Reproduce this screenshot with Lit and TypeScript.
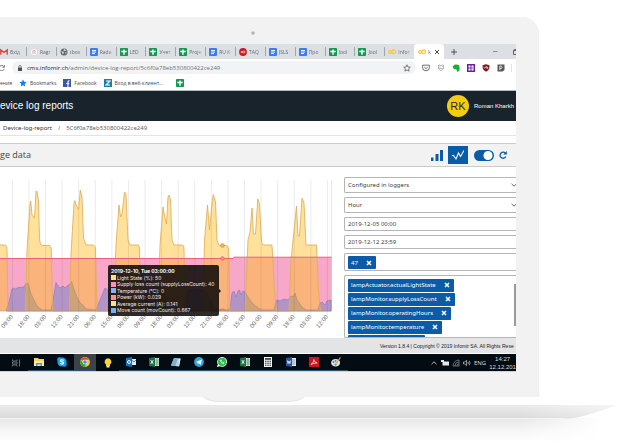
import { LitElement, html, svg, css, TemplateResult } from "lit";
import { customElement } from "lit/decorators.js";

type Icon = TemplateResult;
const box = (cls: string, vb: string, body: unknown): Icon =>
  html`<svg class="ic ${cls}" viewBox=${vb} aria-hidden="true">${body}</svg>`;

const docs = box("s8", "0 0 8 8", svg`<rect width="8" height="8" rx="1" fill="#3b7ded"/><path d="M2 2.5h4M2 4h4M2 5.5h3" stroke="#fff" stroke-width=".9"/>`);
const sheet = box("s8", "0 0 8 8", svg`<rect width="8" height="8" rx=".8" fill="#109a52"/><path d="M1.3 3.5h5.4M4 1.5v5.2" stroke="#fff" stroke-width="1.4"/>`);
const gmail = box("s8", "0 0 8 8", svg`<path d="M.8 6.8V1.8L4 4.4l3.2-2.6v5" fill="none" stroke="#d0423a" stroke-width="1.3"/>`);
const ragr = box("s8", "0 0 8 8", svg`<circle cx="4" cy="4" r="3.6" fill="#fff" stroke="#c9c9cc" stroke-width=".5"/><path d="M3 6V2.4h1.3a1 1 0 0 1 0 2L5.4 6" fill="none" stroke="#d58d87" stroke-width=".8"/>`);
const globe = box("s8", "0 0 8 8", svg`<circle cx="4" cy="4" r="3.5" fill="#64686c"/><path d="M1.3 3.2l2 .4.6 1.3-1 1.4zM4 .9l-.5 1.5 1.5.7 1.6-.7zM5 4.5l1.6-.3-.6 1.7z" fill="#dee1e6"/>`);
const red = box("s8", "0 0 8 8", svg`<circle cx="4" cy="4" r="3.9" fill="#cf1720"/><path d="M2.3 5.2V3.2M2.3 3.6q.8-.8 1.3 0v1.6M3.6 3.6q.9-.8 1.3 0v1.6M5.8 2.6v2.6" fill="none" stroke="#fff" stroke-width=".6"/>`);
const loop = box("s8", "0 0 8 8", svg`<rect x=".6" y="2.6" width="3" height="2.9" rx="1.4" fill="none" stroke="#f3c93a" stroke-width="1.2"/><rect x="4" y="1.8" width="3.4" height="4" rx="1.5" fill="none" stroke="#f3c93a" stroke-width="1.2"/>`);

const tabs: [Icon, string][] = [
  [gmail, "Вхід"], [ragr, "Ragr"], [globe, "tbox"], [docs, "Rada"], [sheet, "LED"],
  [sheet, "Учет"], [sheet, "Proje"], [docs, "RU K"], [red, "TAQ"], [docs, "JSLS"],
  [docs, "Про"], [sheet, "Jool"], [sheet, "Jool"], [loop, "Infor"],
];

const extensions: Icon[] = [
  box("s8", "0 0 8 8", svg`<path d="M.6 1.2h6.8v2.4a3.4 3.2 0 0 1-6.8 0z" fill="none" stroke="#5a5d60" stroke-width=".9"/><path d="M2.3 3.2L4 4.7l1.7-1.5" fill="none" stroke="#5a5d60" stroke-width=".9"/>`),
  box("s8", "0 0 8 8", svg`<path d="M1 1.8l1.5-.8L4 2l1.5-1L7 1.8 5.6 3 7 4.1l-1.5.8L4 4l-1.500.9L1 4.100 2.400 3zM2.400 5.600L4 6.600l1.600-1" fill="none" stroke="#85888b" stroke-width=".7"/>`),
  box("s8", "0 0 8 8", svg`<path d="M.6 2.600L3 .5q2.200-.4 4 .6 1 2.700.4 5.500-.5 1.200-2 1.100-1.200-.4-.5-1.600l-.9-.9q-2.900.6-3.400-2.600z" fill="#1cae38"/>`),
  box("s8", "0 0 8 8", svg`<rect width="8" height="8" fill="#6c1f9c"/><path d="M1.500 1.500h2v2h-2zM1.500 4.500h2v2h-2zM4.500 1.500h2v5h-2z" fill="#fff"/><path d="M4.500 4h1.500" stroke="#6c1f9c" stroke-width=".8"/>`),
  box("s8", "0 0 8 8", svg`<path d="M4 .3l3.400 1v2.500Q7 6.600 4 7.800 1 6.600.6 3.800V1.300z" fill="#80141b"/><path d="M2 2.700v1q.8.900 1.500 0v-1M4.700 2v2.400h1V3.200h-1" fill="none" stroke="#fff" stroke-width=".6"/>`),
  box("s8", "0 0 8 8", svg`<path d="M.5.5h7v5.500L5.500 7.500h-5z" fill="#54575a"/><path d="M2.800 6V2h1.400a1.500 1.500 0 0 1 0 2.700H2.800" fill="none" stroke="#fff" stroke-width=".8"/>`),
];

const excel = box("s10", "0 0 10 10", svg`<path d="M5 1h5v8H5z" fill="#e3efe6"/><path d="M6 3h4M6 5h4M6 7h4M8 1v8" stroke="#2a8150" stroke-width=".6"/><path d="M0 1l6-1v10L0 9z" fill="#1e7145"/><path d="M1.800 3.200l2.400 3.600M4.200 3.200L1.800 6.800" stroke="#fff" stroke-width=".9"/>`);

const apps: { name: string; art: Icon; open?: boolean; active?: boolean }[] = [
  { name: "Task view", art: box("s10", "0 0 10 10", svg`<path d="M1.500 1.500v1.500h4.500V1.500M1.500 8.500V7h4.500v1.500M1.500 4h4.500v2h-4.500zM8.500 1.500v7M8 4h1" fill="none" stroke="#8e9296" stroke-width=".7"/>`) },
  { name: "Explorer", open: true, art: box("s10", "0 0 10 10", svg`<path d="M0 1h4l1 1h5v7H0z" fill="#f6d365"/><path d="M0 4h10v5H0z" fill="#fdeba5"/><path d="M2 9V6h6v3H6.500V7.500h-3V9z" fill="#3e9fdc"/>`) },
  { name: "Skype", open: true, art: box("s10", "0 0 10 10", svg`<circle cx="5" cy="5" r="4.600" fill="#1ba2ea"/><circle cx="2.500" cy="2.600" r="2.300" fill="#1ba2ea"/><circle cx="7.500" cy="7.400" r="2.300" fill="#1b95e0"/><path d="M6.700 3.500Q5 2.300 3.700 3.200 3 4.500 5 4.900q2 .4 1.500 1.600Q5 7.700 3.300 6.400" fill="none" stroke="#fff" stroke-width="1.100"/>`) },
  { name: "Chrome", active: true, open: true, art: box("s10", "0 0 10 10", svg`<circle cx="5" cy="5" r="4.900" fill="#f7c934"/><path d="M5 5L.8 2.500A4.900 4.900 0 0 1 9.300 2.700H5z" fill="#dd4b3e"/><path d="M.8 2.500L5 9.900A4.900 4.900 0 0 1 .8 2.500z" fill="#2ba24c"/><path d="M5 5L3 7l2 2.900.5-1.500z" fill="#2ba24c"/><circle cx="5" cy="5" r="2.300" fill="#fff"/><circle cx="5" cy="5" r="1.800" fill="#4285f4"/>`) },
  { name: "Keep", art: box("s10", "0 0 10 10", svg`<path d="M5 .2a3.500 3.500 0 0 1 2 6.300V8H3V6.500A3.500 3.500 0 0 1 5 .2z" fill="#fbd336"/><path d="M3.500 8h3v1.500h-3z" fill="#f3ead0"/>`) },
  { name: "Outlook", open: true, art: box("s10", "0 0 10 10", svg`<path d="M5 2h5v6H5z" fill="#dcebf7"/><path d="M5.500 3L8 5l2-2" stroke="#1470bd" fill="none" stroke-width=".8"/><path d="M0 1l6-1v10L0 9z" fill="#1470bd"/><circle cx="3" cy="5" r="1.500" fill="none" stroke="#fff"/>`) },
  { name: "Excel", open: true, art: excel },
  { name: "Notepad", open: true, art: box("s10", "0 0 10 10", svg`<path d="M3 1l6.500.5L8 9.500 0 8.500z" fill="#b9d7e6"/><path d="M3 1l4 .3L4.500 9 0 8.500z" fill="#7fb0cd"/><path d="M8 2l1.500-.5L8 9.500z" fill="#e9eef0"/>`) },
  { name: "Telegram", open: true, art: box("s10", "0 0 10 10", svg`<circle cx="5" cy="5" r="4.900" fill="#2da3dc"/><path d="M1.800 5l6-2.500-1 5.300-2-1.500-1 1-.2-1.800z" fill="#fff"/>`) },
  { name: "WhatsApp", open: true, art: box("s10", "0 0 10 10", svg`<path d="M0 10l.8-2.800A4.900 4.900 0 1 1 3 9.300z" fill="#f1fbf3"/><circle cx="5.100" cy="4.900" r="4.100" fill="#27c152"/><path d="M3.500 2.800Q2.600 4 4.200 5.700q1.600 1.700 2.900.9l.2-.8-1.200-.6-.6.600Q4.600 5.300 4.200 4.400l.5-.5-.5-1.200z" fill="#fff"/>`) },
  { name: "Excel sheet", open: true, art: excel },
  { name: "Calculator", open: true, art: box("s10", "0 0 10 10", svg`<path d="M1 0h8v10H1z" fill="#f4f4f4"/><path d="M2 1.200h6v1.500H2z" fill="#20262c"/><path d="M2 4.200h6M2 6.200h6M2 8.200h6" stroke="#20262c" stroke-width="1.100" stroke-dasharray="1.100 .5"/>`) },
  { name: "Word", open: true, art: box("s10", "0 0 10 10", svg`<path d="M5 1h5v8H5z" fill="#eef3fa"/><path d="M6 3h3.500M6 5h3.500M6 7h3.500" stroke="#2a5699" stroke-width=".6"/><path d="M0 1l6-1v10L0 9z" fill="#2a5699"/><path d="M1.300 3.400l.8 3.200L3 4l.9 2.600.8-3.200" fill="none" stroke="#fff" stroke-width=".7"/>`) },
  { name: "Acrobat", open: true, art: box("s10", "0 0 10 10", svg`<path d="M0 0h10v10H0z" fill="#c8161d"/><path d="M2 7.500Q5 5.500 4.800 2.500 5.300 5.500 8.200 6 5 5.700 2 7.500z" fill="none" stroke="#fff" stroke-width=".7"/>`) },
  { name: "Paint", open: true, art: box("s10", "0 0 10 10", svg`<ellipse cx="4.600" cy="5.800" rx="4.500" ry="3.800" fill="#cfe2ee"/><circle cx="2.500" cy="5" r="1" fill="#d9534a"/><circle cx="4.500" cy="7.500" r="1" fill="#4aa564"/><circle cx="4.600" cy="3.900" r=".9" fill="#3f7fc4"/><path d="M5 7l4.300-6.500" stroke="#e8a33a" stroke-width="1.200"/>`) },
];

const tags = ["lampActuator.actualLightState", "lampMonitor.supplyLossCount", "lampMonitor.operatingHours", "lampMonitor.temperature"];

const legend = [
  "Light State (%): 50",
  "Supply loss count (supplyLossCount): 40",
  "Temperature (°C): 0",
  "Power (kW): 0.029",
  "Average current (A): 0.141",
  "Move count (movCount): 0.667",
];

const BASE = 311;
const light = `M0 245H5Q7 245 7 250L8 311H25.500L27 250 30 204 30.700 201 32 215 34.500 218 36 191 37 191.500 38.500 201 39.500 238Q40 245 42 245.500H49.500Q51 245.500 51.300 250L52.500 311H69.500L71 254 74 203 74.700 200.500 76.500 206 78.500 209.500 80.300 190 82 197 83.500 238 86 245H93.500Q95.500 245.500 95.500 250L97 311H113.500L116 245 119 205 120.600 217 122 214 124.500 192 126 194 128 240 130 245H138Q139.500 245 139.500 250L141 311H158L160 245 163 207 164 213 166.500 224 168 197 169 195 170.500 200 172 240 174 245H182.500Q184 245 184 250L185.500 311H203L204.500 240 207.500 205 209.500 230 212 203 213.300 194.500 215.500 202 217 240 219 245.500H226.500Q228.500 246 228.700 250L230 311H245L248 240 250 232 252 208 253.500 234H255.500L257.800 199 259.500 204 261.500 242 263 245H272L274.500 290 276.500 311H289L291 260 293.500 236 296.500 206 298 236H299.500L302 198 304 203 306 245H316.500L318.500 290 320.500 311`;
const moves = `M6 311L9 302 12 289 14 288 15.500 289 18 287.500 24 287 26 283.500 27.500 283 29 287 31 294 34 300 37 306 42 310 51 310 53 300 56 282.500 58 286 60 288 63 286 65 288 67 286 70 284 71.500 281.500 73 286 75 292 78 299 80 303 83 305 86 309 96 310 100 300 105 288 108 290 115 285 120 295 130 309 140 310 146 290 155 287 160 284 172 308 184 310 188 290 204 290 216 309 228 310 230 308 232 293 234 291 236 297 238 291 239.500 290 241 295 243 291 245 292 248 297 252 303 258 308 262 310 274 310 276 301 278 300 280 301 284 299 288 300 291 296 293 297 295 293 297 300 302 307 306 310 318 310 320 303 322 302 325 305 327 301 331 300V${BASE}Z`;
const hours = ["09:00", "18:00", "03:00", "12:00", "21:00", "06:00", "15:00", "00:00"];
const ticks = Array.from({ length: 20 }, (_, i) => ({ x: 12.4 + i * 16.58, label: hours[i % 8] }));

@customElement("log-chart")
export class LogChart extends LitElement {
  static styles = css`
    :host { display: block; position: relative; font-family: "Liberation Sans", Arial, sans-serif; }
    .plot { display: block; width: 100%; }
    .tick { font-size: 6px; fill: #666; text-anchor: end; }
    .tip { position: absolute; left: 108px; top: 98px; width: 111px; height: 51px; box-sizing: border-box; padding: 3px; border-radius: 2px; background: rgba(14, 10, 8, 0.87); color: #eee; font: 5px/6px Inter, "Liberation Sans", sans-serif; white-space: nowrap; display: flex; flex-direction: column; justify-content: space-between; }
    .tip::after { content: ""; position: absolute; left: 100%; top: 24px; border: 2px solid transparent; border-left-color: #17110d; }
    .title { font-weight: bold; color: #fff; }
    .row { display: flex; align-items: center; gap: 1px; }
    .key { width: 5px; height: 5px; flex: none; }
    .k0 { background: #ffdf8c; } .k1 { background: #ff8fb8; } .k2 { background: #7db8ee; }
    .k3 { background: #ff8f93; } .k4 { background: #ffe07a; } .k5 { background: #6fb4f0; }
  `;
  render() {
    return html`
      <svg class="plot" viewBox="0 167 332 171" role="img" aria-label="Average data">
        <defs>
          <clipPath id="low"><path d="M0 258.500H233L234 257.200H332V${BASE}H0Z" /></clipPath>
          <clipPath id="lit"><path d="${light}H0Z" /></clipPath>
        </defs>
        <path d="M0 258.500H233L234 257.200H331.500V${BASE}H0Z" fill="#f7a8c8" />
        <path d=${moves} fill="#b294c7" stroke="#8d7fb5" stroke-width=".7" />
        <path d="${light}H0Z" fill="#ffe19b" />
        <g clip-path="url(#low)">
          <path d="${light}H0Z" fill="#fbb37c" />
          <g clip-path="url(#lit)"><path d=${moves} fill="#cda278" stroke="#b28c70" stroke-width=".7" /></g>
        </g>
        ${ticks.map((t) => svg`<path d="M${t.x} 180V315" stroke="#000" stroke-opacity=".1" stroke-width=".8" />`)}
        <path d="M331.500 180V311" stroke="#000" stroke-opacity=".12" stroke-width=".8" />
        <path d=${light} fill="none" stroke="#dda950" stroke-width=".8" stroke-linejoin="round" />
        <path d="M0 258.500H233L234 257.200H331.500" fill="none" stroke="#ea5f84" stroke-width="1" />
        <path d="M0 311H331.500" stroke="#c98a86" stroke-width=".6" />
        <circle cx="222.500" cy="245.500" r="1.800" fill="#f3bd55" stroke="#c98d33" stroke-width=".8" />
        <circle cx="222.500" cy="258.500" r="1.800" fill="#f59a8a" stroke="#dd5f58" stroke-width=".8" />
        <path d="M220.500 311a2 2 0 0 1 4 0" fill="#ef8f68" stroke="#d9644f" stroke-width=".8" />
        ${ticks.map((t) => svg`<text class="tick" transform="translate(${t.x + 1} 317) rotate(-50)">${t.label}</text>`)}
      </svg>
      <div class="tip" role="tooltip">
        <div class="title">2019-12-10, Tue 03:00:00</div>
        ${legend.map((text, i) => html`<div class="row"><i class="key k${i}"></i>${text}</div>`)}
      </div>
    `;
  }
}

@customElement("app-root")
export class AppRoot extends LitElement {
  static styles = css`
    :host { display: block; background: #fff; overflow: hidden; padding-top: 17px; font: 6px/8px "Open Sans", "Noto Sans", sans-serif; color: #444; }
    * { box-sizing: border-box; }
    button, input, select { font: inherit; color: inherit; margin: 0; padding: 0; border: 0; background: none; border-radius: 0; }
    a { color: inherit; text-decoration: none; }
    h1, h2 { margin: 0; font-weight: normal; }
    .ic { display: block; flex: none; }
    .s6 { width: 6px; height: 6px; } .s8 { width: 8px; height: 8px; } .s10 { width: 10px; height: 10px; } .s12 { width: 12px; height: 12px; }
    .lid { margin-right: 92px; padding: 0 22px 25px 0; background: #f2f2f2; border-top-right-radius: 17px; border-right: 1px solid #eee; }
    .bezel { height: 27px; display: flex; justify-content: center; padding: 14px 10px 0 0; }
    .camera { width: 4px; height: 4px; border-radius: 50%; background: #aaa; border: 1px solid #ccc; }
    .screen { overflow: hidden; background: #fff; white-space: nowrap; }

    .tabs { display: flex; height: 15px; background: #dcdfe4; align-items: stretch; }
    .strip { display: flex; flex: 0 0 444px; }
    .tab { flex: 1 1 0; min-width: 0; display: flex; align-items: center; gap: 2px; padding-left: 4px; overflow: hidden; position: relative; color: #666a6f; text-align: left; font-size: 5px; }
    .tab:first-child { flex: 0 0 26px; padding-left: 0; }
    .tab::before { content: ""; position: absolute; left: 0; top: 3px; width: 1px; height: 9px; background: #a2a5a9; }
    .tab:first-child::before, .tab.on::before { display: none; }
    .label { width: 14px; overflow: hidden; mask-image: linear-gradient(90deg, #000 60%, transparent); }
    .tab.on { background: #fff; border-radius: 3px 3px 0 0; }
    .tab.on .label { width: 4px; }
    .win { flex: 1; display: flex; align-items: center; justify-content: space-between; padding-left: 7px; overflow: hidden; }
    .min { margin-left: 20px; }
    .win .max { margin-right: -4px; }

    .tools { display: flex; height: 17px; align-items: center; padding-right: 4px; }
    .reload { width: 12px; overflow: hidden; }
    .omni { flex: 1; display: flex; align-items: center; gap: 4px; height: 13px; border-radius: 7px; background: #f1f3f4; padding: 0 5px; }
    .url { flex: 1; min-width: 0; color: #6e7276; }
    .url b { font-weight: normal; color: #222; }
    .ext { display: flex; gap: 7px; padding: 0 6px; }
    .edge { width: 1px; height: 8px; background: #e3e3e3; }

    .marks { display: flex; height: 14px; align-items: center; font-size: 5px; color: #444; padding-bottom: 1px; }
    .mark { display: flex; align-items: center; gap: 3px; margin-right: 7px; }
    .mark:first-child { width: 12px; }
    .mark:last-child { margin-left: 6px; }

    .top { display: flex; align-items: center; justify-content: space-between; height: 31px; border-top: 1px solid #b6bcbc; background: #19232c; color: #fff; font-family: "Liberation Sans", Arial, sans-serif; }
    .top h1 { font-size: 10px; line-height: 12px; }
    .user { display: flex; align-items: center; gap: 5px; flex: 0 0 69px; }
    .avatar { flex: none; width: 22px; height: 22px; border-radius: 50%; background: #f6cd0d; color: #27251b; font-size: 11px; line-height: 22px; text-align: center; }
    .crumbs { display: flex; align-items: center; gap: 6px; height: 15px; padding-left: 3px; border-bottom: 1px solid #e4e4e4; color: #666; font-family: "Noto Sans", sans-serif; }
    .crumbs a { color: #333; }
    .card { display: flex; align-items: center; height: 24px; margin-top: 7px; background: #f2f2f2; border: solid #cacccc; border-width: 1px 0; padding-right: 8px; }
    .card h2 { flex: 1; font-size: 9px; line-height: 12px; color: #444; }
    .bars { margin-right: 5px; }
    .line { width: 20px; height: 18px; background: #0b5ca8; display: grid; place-items: center; }
    .toggle { appearance: none; width: 20px; height: 11px; border-radius: 6px; margin: 0 4px 0 6px; background: radial-gradient(circle at 14px 50%, #fff 4px, #0b5ca8 5px); }

    .main { display: flex; gap: 12px; height: 171px; }
    log-chart { flex: 1; min-width: 0; }
    .panel { flex: 0 0 172px; display: flex; flex-direction: column; gap: 4px; padding-top: 10px; overflow: hidden; font-family: "Noto Sans", sans-serif; }
    .field { position: relative; display: block; flex: none; }
    .field select, .field input, .multi { display: block; width: 100%; border: 1px solid #b5b5b5; border-right: 0; border-radius: 2px 0 0 2px; padding: 0 3px; background: #fff; }
    .field select { appearance: none; height: 16px; }
    .field input { height: 14px; }
    .field .ic { position: absolute; right: -1px; top: 5px; }
    .multi { display: flex; flex-direction: column; align-items: flex-start; gap: 2px; position: relative; flex: none; }
    .one { height: 18px; padding-top: 2px; }
    .many { flex: 1; min-height: 0; padding-top: 3px; overflow: hidden; }
    .tag { display: flex; align-items: center; gap: 8px; height: 13px; flex: none; padding: 0 4px 0 3px; background: #0b5ca8; color: #fff; border-radius: 1px; }
    .many .tag { margin-bottom: -1px; border-bottom: 1px solid #0b5ca8; }
    .stub { width: 77px; }
    .thumb { position: absolute; right: 0; top: 8px; width: 2px; height: 42px; background: #9b9b9b; }
    .foot { display: flex; justify-content: flex-end; align-items: center; height: 16px; background: #e3e4e6; border-bottom: 1px solid #fff; color: #222; font: 5px/8px "Liberation Sans", Arial, sans-serif; }
    .legal { flex: 0 0 136px; }

    .task { display: flex; align-items: stretch; justify-content: space-between; height: 18px; background: #030b13; border-bottom: 1px solid #cfd1d3; padding-left: 5px; color: #ddd; }
    .apps { display: flex; flex: 0 0 343px; }
    .app { flex: 1; display: grid; place-items: center; }
    .app.open { border-bottom: 1px solid #31536c; }
    .app.on { background: #3c4248; }
    .tray { display: flex; align-items: center; gap: 3px; flex: 0 0 86px; }
    .clock { flex: 1; text-align: center; font-family: "Liberation Sans", Arial, sans-serif; }

    .foot-art { display: block; width: 100%; }
  `;

  render() {
    const cross = box("s6", "0 0 6 6", svg`<path d="M1 1l4 4M5 1L1 5" stroke="#fff" stroke-width="1.500"/>`);
    const down = box("s6", "0 0 6 6", svg`<path d="M.5 1.800L3 4.200l2.500-2.400" fill="none" stroke="#555" stroke-width=".9"/>`);
    const tag = (t: string) => html`<span class="tag">${t}<button aria-label="Remove ${t}">${cross}</button></span>`;
    return html`
      <div class="lid">
        <div class="bezel"><i class="camera"></i></div>
        <div class="screen">
          <div class="tabs">
            <div class="strip">
              ${tabs.map(([icon, t]) => html`<button class="tab">${icon}<span class="label">${t}</span></button>`)}
              <button class="tab on">${loop}<span class="label">k</span>${box("s6", "0 0 6 6", svg`<path d="M1 1l4 4M5 1L1 5" stroke="#333" stroke-width=".9"/>`)}</button>
            </div>
            <div class="win">
              <button aria-label="New tab">${box("s6", "0 0 6 6", svg`<path d="M3 0v6M0 3h6" stroke="#444" stroke-width=".9"/>`)}</button>
              <button class="min" aria-label="Minimize">${box("s6", "0 0 6 6", svg`<path d="M1 2.500h4.500" stroke="#777" stroke-width=".8"/>`)}</button>
              <button class="max" aria-label="Restore">${box("s8", "0 0 8 8", svg`<path d="M1.500 2.500h4v4h-4zM2.500 2.500v-1h4v4h-1" fill="none" stroke="#444" stroke-width=".8"/>`)}</button>
            </div>
          </div>
          <div class="tools">
            <button class="reload" aria-label="Reload">${box("s6", "2 0 6 6", svg`<path d="M5.800 1.500a2.600 2.600 0 1 0 .4 2.500M6.500.2v2H4.500" fill="none" stroke="#555" stroke-width=".8"/>`)}</button>
            <div class="omni">
              ${box("s6", "0 0 6 6", svg`<path d="M1 2.600h4V6H1z" fill="#4b4e52"/><path d="M1.900 2.800V1.500a1.100 1.100 0 0 1 2.200 0v1.300" fill="none" stroke="#4b4e52" stroke-width=".7"/>`)}
              <span class="url"><b>cms.infomir.ch</b>/admin/device-log-report/5c6f0a78eb530800422ce249</span>
              ${box("s8", "0 0 8 8", svg`<path d="M4 .8l1 2.200 2.300.2-1.700 1.600.5 2.300L4 5.900 1.900 7.100l.5-2.300L.7 3.200 3 3z" fill="none" stroke="#5a5d60" stroke-width=".8"/>`)}
            </div>
            <div class="ext">${extensions}</div>
            <i class="edge"></i>
          </div>
          <nav class="marks">
            <a class="mark" href="#">ения</a>
            <a class="mark" href="#">${box("s8", "0 0 8 8", svg`<path d="M4 .5l1.100 2.300 2.500.3-1.800 1.800.4 2.500L4 6.200 1.800 7.400l.4-2.500L.4 3.100l2.500-.3z" fill="#1a80e5"/>`)}Bookmarks</a>
            <a class="mark" href="#">${box("s8", "0 0 8 8", svg`<path d="M0 0h8v8H0z" fill="#395a9d"/><path d="M5 8V4.500M3.300 4.500h3M5 4.800V3q0-1.300 1.500-1.200" fill="none" stroke="#fff" stroke-width="1.100"/>`)}Facebook</a>
            <a class="mark" href="#">${box("s8", "0 0 8 8", svg`<path d="M0 0h8v8H0z" fill="#1280b8"/><path d="M2 2h4L2 6h4" fill="none" stroke="#fff" stroke-width="1.100"/>`)}Вход в веб-клиент...</a>
            <a class="mark" href="#" aria-label="Sheet">${sheet}</a>
          </nav>
          <header class="top">
            <h1>evice log reports</h1>
            <div class="user"><span class="avatar">RK</span><span>Roman Kharkh</span></div>
          </header>
          <nav class="crumbs"><a href="#">Device-log-report</a><span>/</span><span>5C6f0a78eb530800422ce249</span></nav>
          <section class="card">
            <h2>ge data</h2>
            <button class="bars" aria-label="Bar chart">${box("s12", "0 0 12 12", svg`<path d="M0 8.500h2.500V12H0zM4.500 5h3v7h-3zM9 1h3v11H9z" fill="#0b5ca8"/>`)}</button>
            <button class="line" aria-label="Line chart">${box("s12", "0 0 12 12", svg`<path d="M0 6.500h1.500L4 10 6.500 4l2 3.500L12 1.500" fill="none" stroke="#fff" stroke-width="1.100"/>`)}</button>
            <input class="toggle" type="checkbox" checked aria-label="Auto refresh" />
            <button aria-label="Refresh">${box("s10", "0 0 10 10", svg`<path d="M7.400 3.300A3 3 0 1 0 7.800 6.500" fill="none" stroke="#0b5ca8" stroke-width="1.300"/><path d="M8.800 1v3.500H5.300z" fill="#0b5ca8"/>`)}</button>
          </section>
          <div class="main">
            <log-chart></log-chart>
            <form class="panel">
              <label class="field"><select aria-label="Source"><option>Configured in loggers</option></select>${down}</label>
              <label class="field"><select aria-label="Interval"><option>Hour</option></select>${down}</label>
              <label class="field"><input aria-label="From" value="2019-12-05 00:00" /></label>
              <label class="field"><input aria-label="To" value="2019-12-12 23:59" /></label>
              <div class="multi one">${tag("47")}</div>
              <div class="multi many">${tags.map(tag)}<span class="tag stub"></span><i class="thumb"></i></div>
            </form>
          </div>
          <footer class="foot"><span class="legal">Version 1.8.4 | Copyright © 2019 Infomir SA. All Rights Rese</span></footer>
          <div class="task">
            <div class="apps">
              ${apps.map((a) => html`<button class="app ${a.open ? "open" : ""} ${a.active ? "on" : ""}" aria-label=${a.name}>${a.art}</button>`)}
            </div>
            <div class="tray">
              ${box("s8", "0 0 8 8", svg`<path d="M1.500 5.200L4 2.800l2.500 2.400" fill="none" stroke="#ddd" stroke-width=".8"/>`)}
              ${box("s8", "0 0 8 8", svg`<path d="M1.500 2.500H8v4H1.500zM0 1h3v2H0z" fill="#e8e8e8"/>`)}
              ${box("s8", "0 0 8 8", svg`<path d="M1 7A6 6 0 0 1 7 1M3 7a4 4 0 0 1 4-4M5 7a2 2 0 0 1 2-2M7 1v6H1" fill="none" stroke="#8d9195" stroke-width=".7"/>`)}
              ${box("s8", "0 0 8 8", svg`<path d="M.5 3h1.300l1.700-1.700v5.400L1.800 5H.5zM5 2.800q.8 1.200 0 2.400M6.300 1.800q1.500 2.200 0 4.400" fill="none" stroke="#ccc" stroke-width=".7"/>`)}
              <span>ENG</span>
              <span class="clock">14:27<br />12.12.201</span>
            </div>
          </div>
        </div>
      </div>
      <svg class="foot-art" viewBox="0 0 631 50" aria-hidden="true">
        <defs>
          <linearGradient id="slab" x1="0" y1="0" x2="0" y2="1"><stop offset="0" stop-color="#ebebeb" /><stop offset="1" stop-color="#dadada" /></linearGradient>
          <linearGradient id="tip" x1="0" y1="0" x2="1" y2="0"><stop offset="0" stop-color="#fff" stop-opacity="0" /><stop offset="1" stop-color="#fff" stop-opacity=".5" /></linearGradient>
          <linearGradient id="shade" x1="0" y1="0" x2="0" y2="1"><stop offset="0" stop-color="#e6e6e6" /><stop offset=".5" stop-color="#f6f6f6" /><stop offset="1" stop-color="#fff" /></linearGradient>
          <linearGradient id="fade" x1="0" y1="0" x2="1" y2="0"><stop offset="0" stop-color="#fff" stop-opacity="0" /><stop offset="1" stop-color="#fff" /></linearGradient>
        </defs>
        <path d="M203 0Q209 4.500 220 4.500H287Q299 4.500 304 0Z" fill="#f2f2f2" />
        <path d="M203 0Q209 4.500 220 4.500H287Q299 4.500 304 0" fill="none" stroke="#dcdcdc" stroke-width=".7" />
        <path d="M0 21H600V46H0Z" fill="url(#shade)" />
        <path d="M520 20H601V47H520Z" fill="url(#fade)" />
        <path d="M0 8H616Q604 13 590 17 576 21.500 565 21.500H0Z" fill="url(#slab)" />
        <path d="M520 8H616Q604 13 590 17 576 21.500 565 21.500H520Z" fill="url(#tip)" />
        <path d="M0 21.500H565" stroke="#f4f4f4" stroke-width="1" />
      </svg>
    `;
  }
}
